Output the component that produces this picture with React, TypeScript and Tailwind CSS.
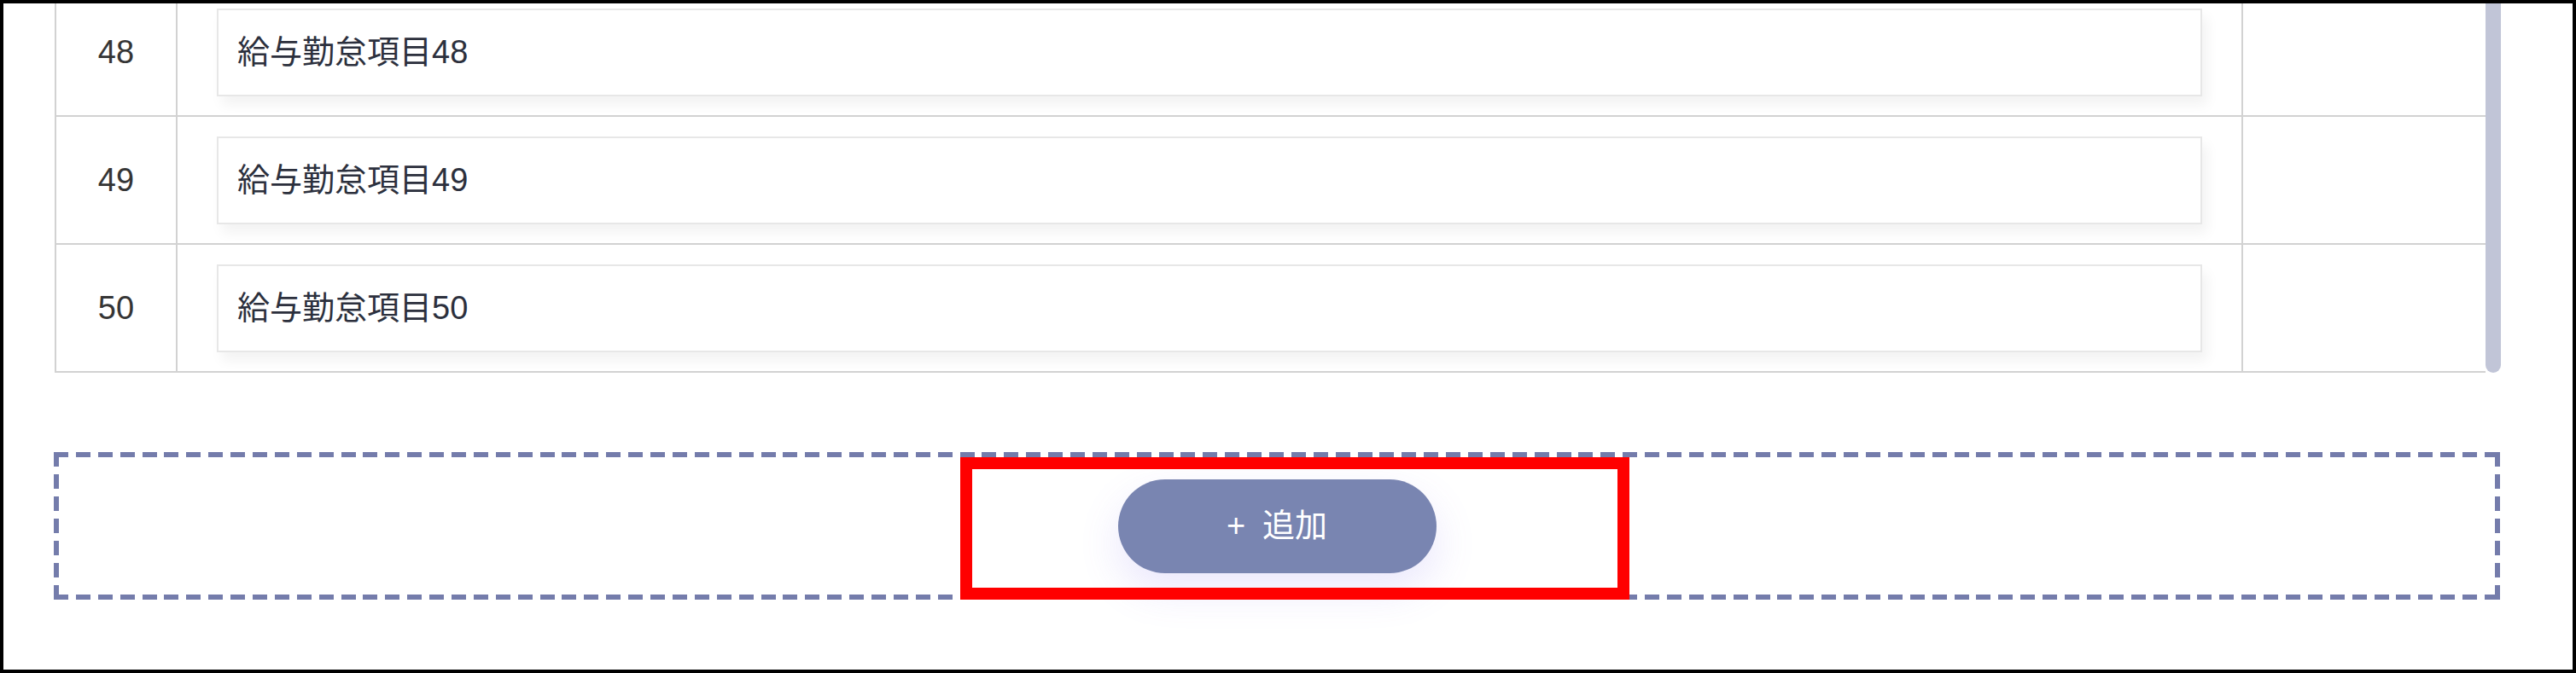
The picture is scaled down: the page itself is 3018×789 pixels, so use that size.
import React from 'react';

const FONT = "font-['Liberation_Sans','Noto_Sans_CJK_JP',sans-serif]";

const ROWS = [48, 49, 50];

function Row({ no }: { no: number }) {
  return (
    <div className="flex h-[150px] shrink-0 border-b-2 border-[#d2d2d2]">
      <div className="flex w-[142px] items-center justify-center border-r-2 border-[#d2d2d2] text-[38px] text-[#353535]">
        {no}
      </div>
      <div className="flex flex-1 items-center border-r-2 border-[#d2d2d2] px-[46px]">
        <div className="flex h-[103px] w-full items-center border-2 border-[#e7e7e7] bg-white pl-[22px] text-[38px] text-[#2c303d] shadow-[6px_10px_14px_rgba(0,0,0,0.05)]">
          給与勤怠項目{no}
        </div>
      </div>
      <div className="w-[284px]" />
    </div>
  );
}

// one edge of the dashed frame
function Dashes({ count, vertical, className }: { count: number; vertical?: boolean; className: string }) {
  return (
    <div
      className={`${vertical ? 'flex w-[6px] flex-col' : 'flex h-[6px]'} justify-between [grid-area:1/1] ${className}`}
    >
      {Array.from({ length: count }).map((_, i) => (
        <span
          key={i}
          className={vertical ? 'h-[17px] w-[6px] bg-[#747cab]' : 'h-[6px] w-[17px] bg-[#747cab]'}
        />
      ))}
    </div>
  );
}

export default function App() {
  return (
    <div
      className={`relative box-border flex h-[789px] w-[3018px] flex-col border-4 border-black bg-white pl-[59px] pr-[84px] ${FONT}`}
    >
      {/* table (scrolled to the bottom) */}
      <div className="flex h-[433px] pl-px">
        <div className="flex flex-1 flex-col justify-end overflow-hidden border-l-2 border-[#d2d2d2]">
          {ROWS.map(no => (
            <Row key={no} no={no} />
          ))}
        </div>
        <div className="w-[18px]">
          <div className="h-full w-full rounded-b-full bg-[#c1c5d7]" />
        </div>
      </div>

      {/* add area */}
      <div className="mt-[93px] mr-px grid grid-cols-[1fr] grid-rows-[173px]">
        <Dashes count={111} className="self-start" />
        <Dashes count={111} className="self-end" />
        <Dashes count={7} vertical className="justify-self-start" />
        <Dashes count={7} vertical className="justify-self-end" />
        <button
          type="button"
          className="flex h-[110px] w-[373px] items-center justify-center gap-[20px] place-self-center rounded-full bg-[#7985b1] text-[38px] text-white shadow-[0_20px_48px_rgba(124,104,238,0.16)] [grid-area:1/1]"
        >
          <span>+</span>
          <span>追加</span>
        </button>
      </div>

      {/* highlight annotation */}
      <div className="pointer-events-none absolute left-[1121px] top-[532px] h-[167px] w-[784px] border-[14px] border-[#ff0000]" />
    </div>
  );
}
